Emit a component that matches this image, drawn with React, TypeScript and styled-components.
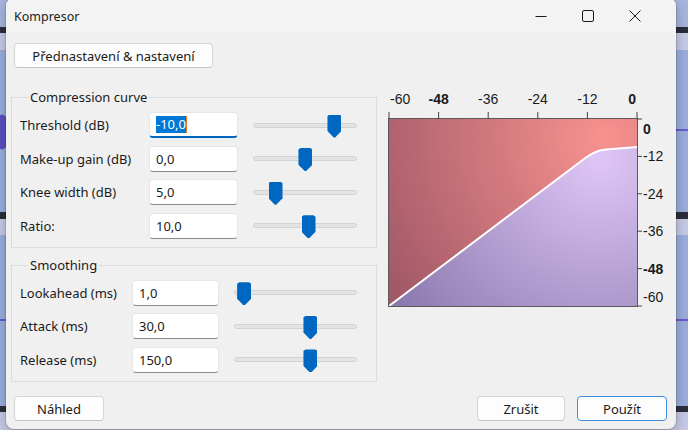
import React from "react";
import styled, { createGlobalStyle } from "styled-components";

const GlobalStyle = createGlobalStyle`
  html, body {
    margin: 0;
    padding: 0;
    width: 688px;
    height: 430px;
    overflow: hidden;
  }
  body {
    font-family: "Noto Sans", "Segoe UI", sans-serif;
    font-size: 13px;
    color: #1b1b1b;
    background:
      radial-gradient(ellipse 10px 24px at 2px 132px, #5a4fc4 0 70%, transparent 75%),
      linear-gradient(
        to bottom,
        #a7b6de 0 27px,
        #2b2e3b 27px 33px,
        #c6cae6 33px 50px,
        #9aaedd 50px 129px,
        #6a5acd 129px 131px,
        #9aaedd 131px 212px,
        #2b2e3b 212px 219px,
        #c6cae6 219px 235px,
        #9aaedd 235px 319px,
        #6a5acd 319px 321px,
        #9aaedd 321px 406px,
        #2b2e3b 406px 412px,
        #c6cae6 412px 430px
      );
  }
`;

const Window = styled.div`
  margin-left: 6px;
  margin-top: -2px;
  width: 670px;
  height: 431px;
  box-sizing: border-box;
  border-radius: 8px;
  background: #f0f0f0;
  box-shadow: 0 0 0 1px rgba(0, 0, 0, 0.12), 0 4px 14px rgba(0, 0, 0, 0.25);
  display: flex;
  flex-direction: column;
  overflow: hidden;
`;

const TitleBar = styled.div`
  height: 35px;
  flex: none;
  display: flex;
  align-items: center;
  padding-left: 8px;
  padding-top: 1px;
  box-sizing: border-box;
  background: #f3f3f3;
  font-size: 12.5px;
`;

const TitleText = styled.div`
  flex: 1;
`;

const Caption = styled.div<{ $last?: boolean }>`
  width: 47px;
  height: 33px;
  display: flex;
  align-items: center;
  justify-content: center;
  margin-right: ${(p) => (p.$last ? 18 : 0)}px;
`;

const Body = styled.div`
  flex: 1;
  display: flex;
  flex-direction: column;
  padding: 10px 9px 8px 5px;
`;

const Button = styled.button<{ $primary?: boolean; $w: number }>`
  width: ${(p) => p.$w}px;
  height: 25px;
  box-sizing: border-box;
  font-family: inherit;
  font-size: 13px;
  color: #1b1b1b;
  background: #fdfdfd;
  border: 1px solid ${(p) => (p.$primary ? "#3d8ee0" : "#d5d5d5")};
  border-bottom-color: ${(p) => (p.$primary ? "#3d8ee0" : "#c4c4c4")};
  border-radius: 4px;
  padding: 0;
  margin: 0;
`;

const PresetButton = styled(Button)`
  margin-left: 3px;
`;

const Main = styled.div`
  display: flex;
  gap: 8px;
  margin-top: 21px;
`;

const LeftColumn = styled.div`
  flex: none;
  width: 366px;
  display: flex;
  flex-direction: column;
  gap: 9px;
`;

const Group = styled.fieldset`
  margin: 0;
  padding: 6px 19px 8px 8px;
  border: 1px solid #dcdcdc;
  min-width: 0;
`;

const Legend = styled.legend`
  padding: 0 2px;
  margin-left: 8px;
  font-size: 13px;
  line-height: 17px;
`;

const Rows = styled.div<{ $cols: string }>`
  display: grid;
  grid-template-columns: ${(p) => p.$cols};
  row-gap: 7.6px;
  align-items: center;
`;

const Label = styled.div`
  white-space: nowrap;
`;

const Field = styled.div<{ $focused?: boolean }>`
  height: 26px;
  box-sizing: border-box;
  background: #ffffff;
  border: 1px solid #e6e6e6;
  border-bottom: ${(p) => (p.$focused ? "2px solid #0067c0" : "1px solid #8a8a8a")};
  border-radius: 4px;
  padding: 0 6px;
  display: flex;
  align-items: center;
  font-size: 13px;
`;

const Selected = styled.span`
  background: #0078d7;
  color: #ffffff;
  line-height: 17px;
  border-right: 1px solid #e07a2a;
`;

const Track = styled.div`
  position: relative;
  height: 5px;
  box-sizing: border-box;
  background: #e4e4e4;
  border: 1px solid #d2d2d2;
  border-radius: 3px;
  margin-left: 15px;
`;

const Thumb = styled.div`
  position: absolute;
  top: -9px;
  width: 14px;
  height: 23px;
  margin-left: -7px;
  background: #0067c0;
  clip-path: polygon(15% 0, 85% 0, 100% 6%, 100% 72%, 55% 100%, 45% 100%, 0 72%, 0 6%);
`;

const GraphBox = styled.div`
  flex: none;
  width: 282px;
  height: 224px;
  margin-top: -1px;
`;

const Footer = styled.div`
  margin-top: auto;
  display: flex;
  align-items: center;
  gap: 12px;
  padding-left: 3px;
`;

const Spacer = styled.div`
  flex: 1;
`;

type SliderProps = { frac: number };

const Slider: React.FC<SliderProps> = ({ frac }) => (
  <Track>
    <Thumb style={{ left: `calc(7px + ${frac} * (100% - 14px))` }} />
  </Track>
);

type Param = { label: string; value: string; frac: number; focused?: boolean };

const curveParams: Param[] = [
  { label: "Threshold (dB)", value: "-10,0", frac: 0.835, focused: true },
  { label: "Make-up gain (dB)", value: "0,0", frac: 0.505 },
  { label: "Knee width (dB)", value: "5,0", frac: 0.165 },
  { label: "Ratio:", value: "10,0", frac: 0.54 },
];

const smoothParams: Param[] = [
  { label: "Lookahead (ms)", value: "1,0", frac: 0.02 },
  { label: "Attack (ms)", value: "30,0", frac: 0.64 },
  { label: "Release (ms)", value: "150,0", frac: 0.64 },
];

const ParamRows: React.FC<{ items: Param[]; cols: string }> = ({ items, cols }) => (
  <Rows $cols={cols}>
    {items.map((p) => (
      <React.Fragment key={p.label}>
        <Label>{p.label}</Label>
        <Field $focused={p.focused}>
          {p.focused ? <Selected>{p.value}</Selected> : p.value}
        </Field>
        <Slider frac={p.frac} />
      </React.Fragment>
    ))}
  </Rows>
);

// plot geometry in svg coords
const PX0 = 4;
const PX1 = 252;
const PY0 = 31;
const PY1 = 218;
const xOf = (db: number) => PX0 + ((db + 60) * (PX1 - PX0)) / 60;
const yOf = (db: number) => PY0 + (-db * (PY1 - PY0)) / 60;

const Graph: React.FC = () => {
  const thr = -10;
  const knee = 5;
  const ratio = 10;
  const k0 = thr - knee / 2;
  const k1 = thr + knee / 2;
  const out1 = thr + (k1 - thr) / ratio;
  const outEnd = thr + (0 - thr) / ratio;
  const curve = `M${xOf(-60)},${yOf(-60)} L${xOf(k0)},${yOf(k0)} Q${xOf(thr)},${yOf(thr)} ${xOf(k1)},${yOf(out1)} L${xOf(0)},${yOf(outEnd)}`;
  const below = `${curve} L${PX1},${PY1} Z`;
  const ticks = [-60, -48, -36, -24, -12, 0];
  const labelStyle = { fontFamily: '"Liberation Sans", Arial, sans-serif', fontSize: 14, fill: "#1a1a1a" };
  return (
    <svg width="282" height="224" viewBox="0 0 282 224">
      <defs>
        <radialGradient id="red" cx={xOf(-8)} cy={yOf(-6)} r="260" gradientUnits="userSpaceOnUse">
          <stop offset="0" stopColor="#f7928f" />
          <stop offset="1" stopColor="#a15867" />
        </radialGradient>
        <radialGradient id="violet" cx={xOf(-9)} cy={yOf(-13)} r="260" gradientUnits="userSpaceOnUse">
          <stop offset="0" stopColor="#dfc6f6" />
          <stop offset="1" stopColor="#8776ab" />
        </radialGradient>
      </defs>
      <rect x={PX0} y={PY0} width={PX1 - PX0} height={PY1 - PY0} fill="url(#red)" />
      <path d={below} fill="url(#violet)" />
      <path d={curve} fill="none" stroke="#ffffff" strokeWidth="2" />
      <rect x={PX0 - 0.5} y={PY0 - 0.5} width={PX1 - PX0 + 1} height={PY1 - PY0 + 1} fill="none" stroke="#5a5a5a" />
      {ticks.map((t, i) => {
        const x = xOf(t);
        const anchor = i === 0 ? "start" : i === ticks.length - 1 ? "end" : "middle";
        const bold = t === -48 || t === 0;
        return (
          <g key={`x${t}`}>
            <line x1={x} y1={PY0 - 7} x2={x} y2={PY0} stroke="#444" />
            <text x={i === 0 ? x + 1 : i === ticks.length - 1 ? x - 1 : x} y={16} textAnchor={anchor} style={{ ...labelStyle, fontWeight: bold ? 700 : 400 }}>
              {t}
            </text>
          </g>
        );
      })}
      {ticks.map((t, i) => {
        const y = yOf(t);
        const bold = t === -48 || t === 0;
        const ty = i === 5 ? y + 15 : i === 0 ? y - 4 : y + 5;
        return (
          <g key={`y${t}`}>
            <line x1={PX1} y1={y} x2={PX1 + 5} y2={y} stroke="#444" />
            <text x={PX1 + 6} y={ty} style={{ ...labelStyle, fontWeight: bold ? 700 : 400 }}>
              {t}
            </text>
          </g>
        );
      }).reverse()}
    </svg>
  );
};

const App: React.FC = () => (
  <>
    <GlobalStyle />
    <Window>
      <TitleBar>
        <TitleText>Kompresor</TitleText>
        <Caption>
          <svg width="12" height="12" viewBox="0 0 12 12">
            <line x1="0.5" y1="6.5" x2="11.5" y2="6.5" stroke="#1b1b1b" />
          </svg>
        </Caption>
        <Caption>
          <svg width="12" height="12" viewBox="0 0 12 12">
            <rect x="0.5" y="0.5" width="11" height="11" rx="1.5" fill="none" stroke="#1b1b1b" />
          </svg>
        </Caption>
        <Caption $last>
          <svg width="12" height="12" viewBox="0 0 12 12">
            <path d="M0.5 0.5 L11.5 11.5 M11.5 0.5 L0.5 11.5" stroke="#1b1b1b" />
          </svg>
        </Caption>
      </TitleBar>
      <Body>
        <div>
          <PresetButton $w={199}>Přednastavení &amp; nastavení</PresetButton>
        </div>
        <Main>
          <LeftColumn>
            <Group>
              <Legend>Compression curve</Legend>
              <ParamRows items={curveParams} cols="129px 89px 1fr" />
            </Group>
            <Group>
              <Legend>Smoothing</Legend>
              <ParamRows items={smoothParams} cols="112px 87px 1fr" />
            </Group>
          </LeftColumn>
          <GraphBox>
            <Graph />
          </GraphBox>
        </Main>
        <Footer>
          <Button $w={90}>Náhled</Button>
          <Spacer />
          <Button $w={88}>Zrušit</Button>
          <Button $w={90} $primary>
            Použít
          </Button>
        </Footer>
      </Body>
    </Window>
  </>
);

export default App;
